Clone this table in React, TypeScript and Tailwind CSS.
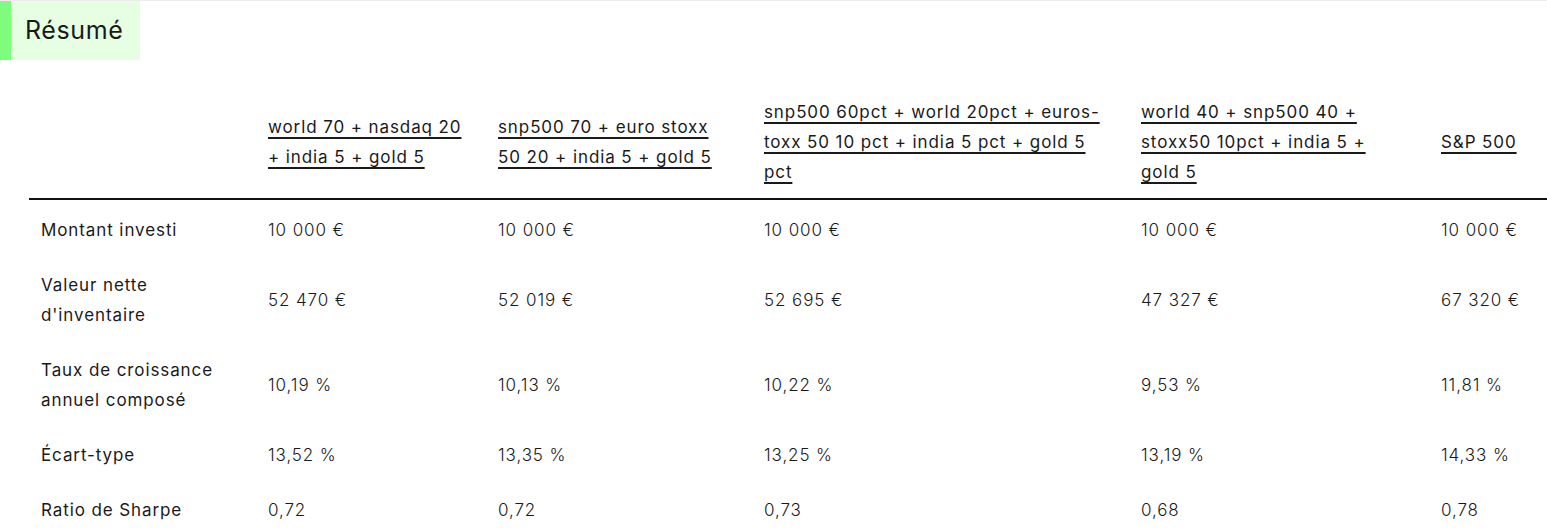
import React from 'react';

type Row = { label: string[]; values: string[] };

const portfolios: string[][] = [
  ['world 70 + nasdaq 20', '+ india 5 + gold 5'],
  ['snp500 70 + euro stoxx', '50 20 + india 5 + gold 5'],
  ['snp500 60pct + world 20pct + euros-', 'toxx 50 10 pct + india 5 pct + gold 5', 'pct'],
  ['world 40 + snp500 40 +', 'stoxx50 10pct + india 5 +', 'gold 5'],
  ['S&P 500'],
];

const rows: Row[] = [
  { label: ['Montant investi'], values: ['10 000 €', '10 000 €', '10 000 €', '10 000 €', '10 000 €'] },
  { label: ['Valeur nette', "d'inventaire"], values: ['52 470 €', '52 019 €', '52 695 €', '47 327 €', '67 320 €'] },
  { label: ['Taux de croissance', 'annuel composé'], values: ['10,19 %', '10,13 %', '10,22 %', '9,53 %', '11,81 %'] },
  { label: ['Écart-type'], values: ['13,52 %', '13,35 %', '13,25 %', '13,19 %', '14,33 %'] },
  { label: ['Ratio de Sharpe'], values: ['0,72', '0,72', '0,73', '0,68', '0,78'] },
];

export default function App() {
  return (
    <div
      className="w-[1547px] h-[531px] overflow-hidden bg-white text-[#1a1a1a] border-t border-[#ececec]"
      style={{ fontFamily: 'Inter, "Noto Sans", sans-serif' }}
    >
      {/* Section title */}
      <div className="flex">
        <div className="w-[11px] h-[59px] bg-[#7dfc7d]" />
        <div className="w-[129px] h-[59px] bg-[#e6ffe3] flex items-center pl-[14px]">
          <h2 className="text-[25px] font-normal tracking-[0.6px]">Résumé</h2>
        </div>
      </div>

      {/* Summary table */}
      <div className="pl-[29px] pt-[32px]">
        <table className="table-fixed border-collapse w-[1530px] text-[17px] leading-[30px] tracking-[0.9px]">
          <colgroup>
            <col className="w-[227px]" />
            <col className="w-[230px]" />
            <col className="w-[266px]" />
            <col className="w-[377px]" />
            <col className="w-[300px]" />
            <col />
          </colgroup>
          <thead>
            <tr className="border-b-2 border-[#111]">
              <th className="px-3 pt-[5px] pb-[11px]" />
              {portfolios.map((lines, i) => (
                <th key={i} className="px-3 pt-[5px] pb-[11px] text-left align-middle font-normal">
                  <a href="#" className="underline underline-offset-[4px] decoration-[1.5px] whitespace-nowrap">
                    {lines.map((l, j) => (
                      <React.Fragment key={j}>
                        {l}
                        {j < lines.length - 1 && <br />}
                      </React.Fragment>
                    ))}
                  </a>
                </th>
              ))}
            </tr>
          </thead>
          <tbody>
            {rows.map((row, r) => (
              <tr key={row.label.join(' ')}>
                <td className={`px-3 ${r === 0 ? 'pt-[14.5px]' : 'pt-[12.5px]'} pb-[12.5px] font-normal align-middle whitespace-nowrap`}>
                  {row.label.map((l, j) => (
                    <div key={j}>{l}</div>
                  ))}
                </td>
                {row.values.map((v, i) => (
                  <td
                    key={i}
                    className={`px-3 ${r === 0 ? 'pt-[14.5px]' : 'pt-[12.5px]'} pb-[12.5px] font-light align-middle whitespace-nowrap`}
                  >
                    {v}
                  </td>
                ))}
              </tr>
            ))}
          </tbody>
        </table>
      </div>
    </div>
  );
}
